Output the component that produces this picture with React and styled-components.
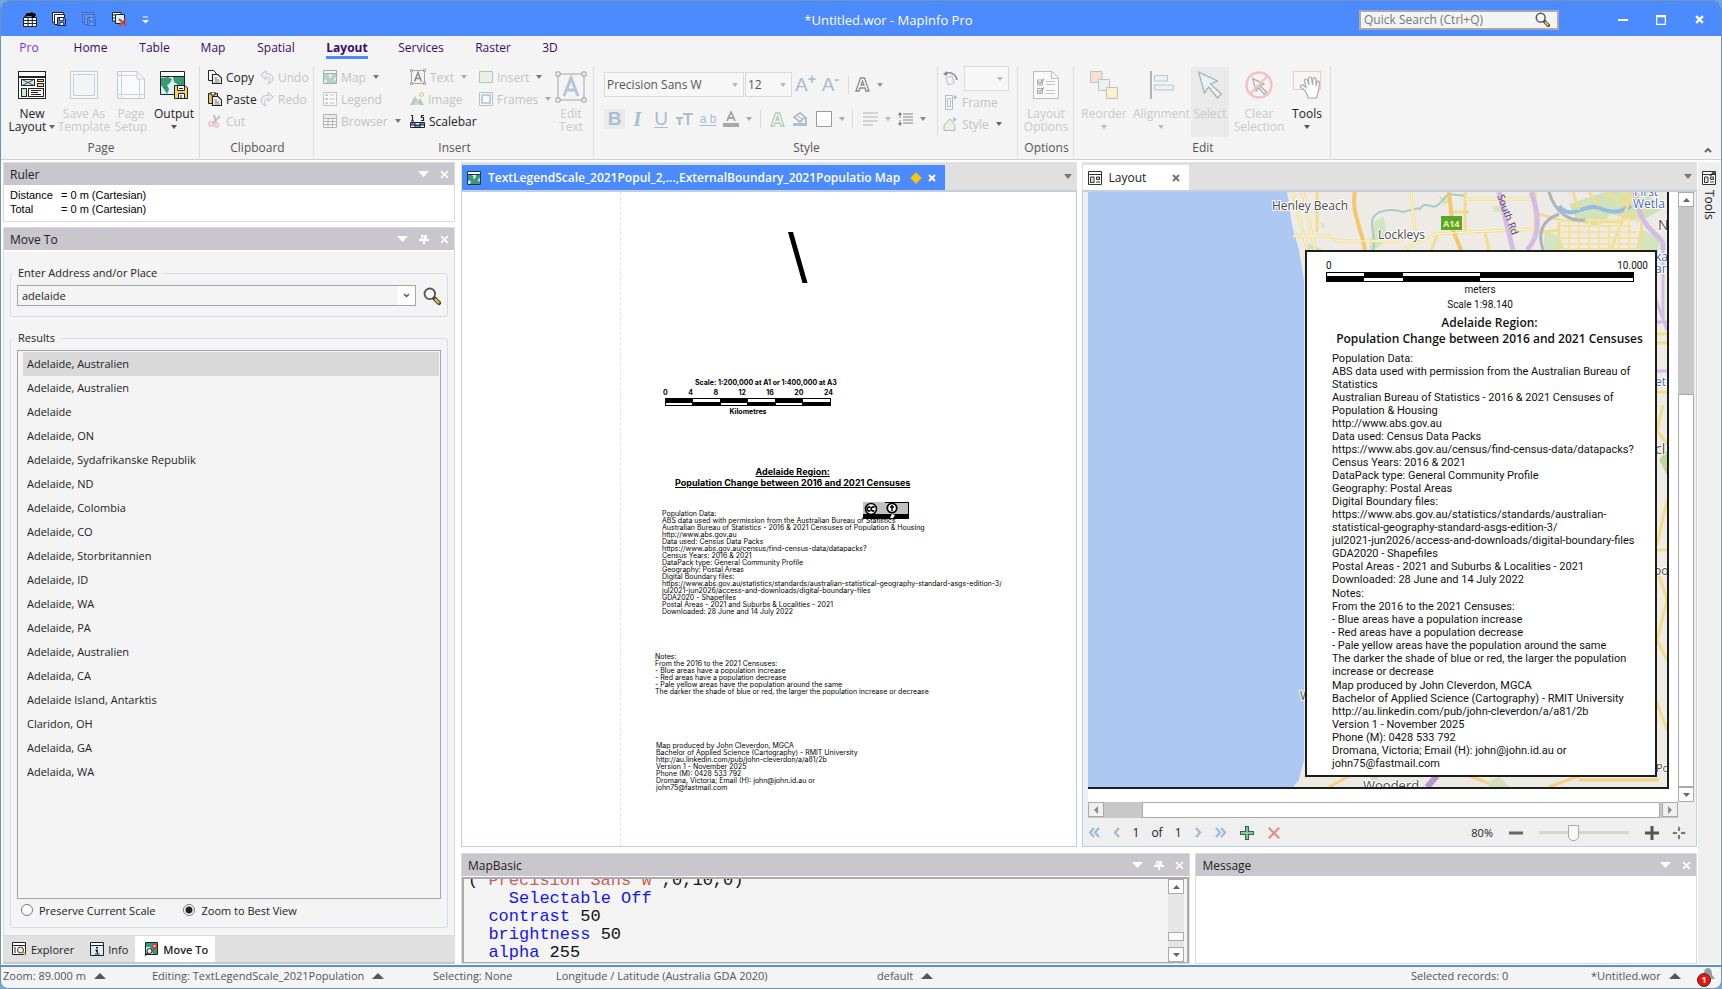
import React from 'react';
import styled, { createGlobalStyle, css } from 'styled-components';

const ui = '"Open Sans", "Noto Sans", sans-serif';
const arial = '"Liberation Sans", Arial, sans-serif';

const results = [
	'Adelaide, Australien', 'Adelaide, Australien', 'Adelaide', 'Adelaide, ON',
	'Adelaide, Sydafrikanske Republik', 'Adelaide, ND', 'Adelaide, Colombia',
	'Adelaide, CO', 'Adelaide, Storbritannien', 'Adelaide, ID', 'Adelaide, WA',
	'Adelaide, PA', 'Adelaide, Australien', 'Adelaida, CA',
	'Adelaide Island, Antarktis', 'Claridon, OH', 'Adelaida, GA', 'Adelaida, WA'
];

const ribbonTabs = [
	{ name: 'Pro', width: 56 }, { name: 'Home', width: 67 }, { name: 'Table', width: 61 },
	{ name: 'Map', width: 56 }, { name: 'Spatial', width: 70 }, { name: 'Layout', width: 72 },
	{ name: 'Services', width: 76 }, { name: 'Raster', width: 68 }, { name: '3D', width: 46 }
];

const dataStart = ['Population Data:'];
const dataMiddle = [
	'http://www.abs.gov.au', 'Data used: Census Data Packs',
	'https://www.abs.gov.au/census/find-census-data/datapacks?',
	'Census Years: 2016 & 2021', 'DataPack type: General Community Profile',
	'Geography: Postal Areas', 'Digital Boundary files:'
];
const dataEnd = [
	'GDA2020 - Shapefiles', 'Postal Areas - 2021 and Suburbs & Localities - 2021',
	'Downloaded: 28 June and 14 July 2022'
];
const notes = [
	'Notes:', 'From the 2016 to the 2021 Censuses:', '- Blue areas have a population increase',
	'- Red areas have a population decrease',
	'- Pale yellow areas have the population around the same'
];
const producer = [
	'Map produced by John Cleverdon, MGCA',
	'Bachelor of Applied Science (Cartography) - RMIT University',
	'http://au.linkedin.com/pub/john-cleverdon/a/a81/2b',
	'Version 1 - November 2025', 'Phone (M): 0428 533 792',
	'Dromana, Victoria; Email (H): john@john.id.au or', 'john75@fastmail.com'
];

const mapData = [
	...dataStart,
	'ABS data used with permission from the Australian Bureau of Statistics',
	'Australian Bureau of Statistics - 2016 & 2021 Censuses of Population & Housing',
	...dataMiddle,
	'https://www.abs.gov.au/statistics/standards/australian-statistical-geography-standard-asgs-edition-3/',
	'jul2021-jun2026/access-and-downloads/digital-boundary-files',
	...dataEnd
];
const mapNotes = [...notes, 'The darker the shade of blue or red, the larger the population increase or decrease'];

const layoutData = [
	...dataStart,
	'ABS data used with permission from the Australian Bureau of', 'Statistics',
	'Australian Bureau of Statistics - 2016 & 2021 Censuses of', 'Population & Housing',
	...dataMiddle,
	'https://www.abs.gov.au/statistics/standards/australian-',
	'statistical-geography-standard-asgs-edition-3/',
	'jul2021-jun2026/access-and-downloads/digital-boundary-files',
	...dataEnd
];
const layoutNotes = [...notes, 'The darker the shade of blue or red, the larger the population', 'increase or decrease'];

const GlobalStyle = createGlobalStyle`
	* { box-sizing: border-box; }
	body { margin: 0; background: #6fa9d6; font-family: ${ui}; font-size: 12px; color: #222; }
	button, input, select { font: inherit; color: inherit; margin: 0; padding: 0; border: none; background: none; border-radius: 0; }
	fieldset, ul, p, pre, h1, h2 { margin: 0; padding: 0; }
	svg { display: block; flex: none; }
`;

/* ---------- icons ---------- */

const Caret = ({ up, w = 7, h = 4, color = '#666' }) => (
	<svg width={w} height={h} viewBox="0 0 10 5" preserveAspectRatio="none">
		<path d={up ? 'M0 5L5 0L10 5Z' : 'M0 0H10L5 5Z'} fill={color} />
	</svg>
);

const CloseIcon = ({ size = 8, color = '#fff', weight = 2 }) => (
	<svg width={size} height={size} viewBox="0 0 8 8">
		<path d="M1 1L7 7M7 1L1 7" stroke={color} strokeWidth={weight} />
	</svg>
);

const PinIcon = () => (
	<svg width="10" height="10" viewBox="0 0 10 10">
		<path d="M2 1H8V5H10V7H6V10H4V7H0V5H2Z" fill="#fff" />
		<path d="M4 2V5" stroke="#c9c6cd" />
	</svg>
);

const SearchIcon = ({ size = 15 }) => (
	<svg width={size} height={size} viewBox="0 0 18 18">
		<path d="M11 11L16 16" stroke="#333" strokeWidth="4" strokeLinecap="round" />
		<path d="M12.5 12.5L15.5 15.5" stroke="#e8c547" strokeWidth="2.4" strokeLinecap="round" />
		<circle cx="6.8" cy="6.8" r="5.3" fill="#f8f8f8" stroke="#555" strokeWidth="1.8" />
	</svg>
);

const Floppy = ({ x = 0, y = 0, fill = '#4b8bff' }) => (
	<g transform={`translate(${x} ${y})`}>
		<path d="M.5.5H7.5L8.5 1.5V8.5H.5Z" fill={fill} stroke="#222" />
		<path d="M2.5 1V3.5H6.5V1M3 8V5.5H6.500V8" fill="#fff" stroke="#222" strokeWidth=".8" />
	</g>
);

const OpenTableIcon = () => (
	<svg width="14" height="15" viewBox="0 0 14 15">
		<path d="M.5 5.500H13.500V14.500H.5Z" fill="#fff" stroke="#222" />
		<path d="M1 8.500H13M1 11.500H13M5 6V14M9.300 6V14" stroke="#222" />
		<path d="M1 5L4 1H8V0L13 2L12 5L8 6L9 4H5Z" fill="#000" />
	</svg>
);

const SaveCopyIcon = ({ faded }) => (
	<svg width="15" height="15" viewBox="0 0 15 15" opacity={faded ? 0.3 : 1}>
		<path d="M.5.5H11.500V10.500H.5Z" fill={faded ? '#8fb5f5' : '#fff'} stroke="#222" />
		<path d="M2.500 2.500H12.500V12.500H2.500Z" fill={faded ? '#8fb5f5' : '#fff'} stroke="#222" />
		<Floppy x={5} y={5} />
	</svg>
);

const CloseAllIcon = () => (
	<svg width="15" height="15" viewBox="0 0 15 15">
		<path d="M.5.5H9V9H.5Z" fill="#fff" stroke="#222" />
		<path d="M.5 3H4M.5 6H4" stroke="#222" />
		<path d="M3.500 2.500H12.500V11.500H3.500Z" fill="#d6f3f5" stroke="#222" />
		<path d="M7 7L14 14M14 7L7 14" stroke="#d2423c" strokeWidth="2" />
	</svg>
);

const MapTile = ({ size = 14, faded, stroke = '#222' }) => (
	<svg width={size} height={size} viewBox="0 0 14 14" opacity={faded ? 0.35 : 1}>
		<path d="M.5.5H13.500V13.500H.5Z" fill="#fff" stroke={stroke} />
		<path d="M1 4H13V13H1Z" fill="#3a9a72" />
		<path d="M1 10L2.500 9L4 11L3 13H1ZM5 4L6.500 6L6 8L8 7.500L9 6V4ZM11.500 8L13 7V10L11 11Z" fill="#cfe9ee" />
		<path d="M1 3.500H13" stroke={stroke} />
	</svg>
);

const NewLayoutIcon = () => (
	<svg width="28" height="28" viewBox="0 0 28 28" shapeRendering="crispEdges">
		<path d="M.5.500H27.500V27.500H.5Z" fill="#fff" stroke="#222" />
		<path d="M1 5.500H27" stroke="#222" strokeWidth="2" />
		<path d="M3.500 8.500H16.500V14.500H3.500Z" fill="#cdeaf4" stroke="#222" />
		<path d="M5 9L15 14M5 14L15 9" stroke="#444" shapeRendering="auto" />
		<path d="M19 8H25V10.500H19ZM19 12.500H25V15H19Z" fill="#f0d877" stroke="#222" />
		<path d="M3.500 17.500H8V25.500H3.500Z" fill="#cfe8cd" stroke="#222" />
		<path d="M10.500 17.500H25.500V25.500H10.500Z" fill="#fff" stroke="#222" />
		<path d="M12.500 19.500H23M12.500 21.500H20M12.500 23.500H23" stroke="#222" />
	</svg>
);

const TemplateIcon = () => (
	<svg width="28" height="28" viewBox="0 0 28 28">
		<path d="M.5.5H27.500V27.500H.5Z" fill="#f4fafc" stroke="#c6cacd" />
		<path d="M3.500 3.500H24.500V24.500H3.500Z" fill="#f4f4f4" stroke="#b9cfe6" />
	</svg>
);

const PageSetupIcon = () => (
	<svg width="28" height="28" viewBox="0 0 28 28">
		<path d="M.5.5H20L27.500 8V27.500H.5Z" fill="#fafafa" stroke="#c6c9cc" />
		<path d="M20 .5V8H27.500" fill="none" stroke="#c6c9cc" />
		<path d="M4.500 1V27M1 4.500H20M1 23.500H27M22.500 8V27" stroke="#bdd3e8" />
	</svg>
);

const OutputIcon = () => (
	<svg width="28" height="28" viewBox="0 0 28 28">
		<path d="M.5.5H24.500V23.500H.5Z" fill="#d5f0f8" stroke="#222" />
		<path d="M1 1H24V5H1Z" fill="#fff" />
		<path d="M1 5.500H24" stroke="#222" />
		<path d="M1 7L8 6L12 8L10 12L7 14L9 18L7 23L4 18L1 14ZM13 6H24V14L20 17L17 13L14 11Z" fill="#3a9a72" />
		<path d="M14.500 14.500H25L27.500 17V27.500H14.500Z" fill="#f0d66a" stroke="#222" />
		<path d="M17.500 15V19.500H24.500V15M18.500 27V22.500H24.500V27" fill="#fff" stroke="#222" />
		<path d="M19 17.500H23M21 24V27" stroke="#222" />
	</svg>
);

const PageFoldIcon = ({ paste }) => (
	<svg width="14" height="14" viewBox="0 0 14 14">
		{paste
			? <path d="M.5 1.500H9.500V11.500H.5Z" fill="#e9c95b" stroke="#222" />
			: <path d="M.5.5H5.500L8 3V10.500H.5Z" fill="#fff" stroke="#222" />}
		{paste && <path d="M3 0H7V3H3Z" fill="#fff" stroke="#222" />}
		<path d="M4.500 4.500H10L13.500 8V13.500H4.500Z" fill="#fff" stroke="#222" strokeWidth="1.2" />
		<path d="M6.500 8H9M6.500 10H11.500M6.500 12H11.500" stroke="#444" strokeWidth=".8" />
	</svg>
);

const CutIcon = () => (
	<svg width="14" height="14" viewBox="0 0 14 14" fill="none">
		<path d="M6 1L8 8M12 2L5 9" stroke="#bfc1c4" strokeWidth="2" />
		<circle cx="3" cy="10" r="2" stroke="#ecc0bd" strokeWidth="1.500" />
		<circle cx="8.500" cy="11" r="2" stroke="#ecc0bd" strokeWidth="1.500" />
	</svg>
);

const UndoIcon = ({ flip }) => (
	<svg width="14" height="14" viewBox="0 0 14 14">
		<g transform={flip ? 'translate(14 0) scale(-1 1)' : undefined}>
			<path d="M.7 5L6 .7V3.500C10 3 13 5 13 8.500C13 11 11 13 8 13.500C10 11 10.500 7.500 6 7.300V9.500Z" fill="#e9eff0" stroke="#bcc2c4" />
		</g>
	</svg>
);

const LegendIcon = () => (
	<svg width="14" height="14" viewBox="0 0 14 14">
		<path d="M.5.5H13.500V13.500H.5Z" fill="#fafafa" stroke="#c4c4c4" />
		<path d="M2.500 3H4.500" stroke="#8fc1ee" strokeWidth="2" />
		<path d="M2.500 7H4.500" stroke="#f19a9a" strokeWidth="2" />
		<path d="M2.500 11H4.500" stroke="#a5d3a0" strokeWidth="2" />
		<path d="M6.500 3H11.500M6.500 7H11.500M6.500 11H11.500" stroke="#c4c4c4" />
	</svg>
);

const BrowserIcon = () => (
	<svg width="14" height="14" viewBox="0 0 14 14">
		<path d="M.5.5H13.500V13.500H.5Z" fill="#fafafa" stroke="#b5b5b5" />
		<path d="M1 1H13V4H1Z" fill="#e0edf4" />
		<path d="M.5 4.500H13.500M.5 7.500H13.500M.5 10.500H13.500M5 4V14M9.500 4V14" stroke="#b5b5b5" />
	</svg>
);

const TextFrameIcon = ({ size = 16, letter = '#888', thick = 2 }) => (
	<svg width={size} height={size} viewBox="0 0 16 16" fill="none">
		<path d="M1.500 1.500H14.500V14.500H1.500Z" stroke="#a5a5a5" strokeWidth={thick / 2} />
		<path d="M4.500 12.500L8 3.500L11.500 12.500M5.500 9.500H10.500" stroke={letter} strokeWidth="1.500" />
		<path d="M.5.5h2v2h-2zM13.500.5h2v2h-2zM.5 13.500h2v2h-2zM13.500 13.500h2v2h-2z" fill="#f4f4f4" stroke="#a0a0a0" strokeWidth={thick / 2} />
	</svg>
);

const ImageIcon = () => (
	<svg width="14" height="14" viewBox="0 0 14 14">
		<path d="M0 13L5 4L8 9L10 6L14 13Z" fill="#bcc7b5" />
		<path d="M3 13L6 8L10 13Z" fill="#cfdcbd" />
		<circle cx="11.500" cy="2.500" r="2" fill="#f6ecc0" stroke="#d8cc9c" />
	</svg>
);

const ScalebarIcon = () => (
	<svg width="15" height="14" viewBox="0 0 15 14">
		<path d="M1 1.500H2.500V7M1 7H4M14 1.500H11.500V3.500H13.500V6.500H11" fill="none" stroke="#222" strokeWidth="1.200" />
		<path d="M.5 8.500H14.500V13.500H.5Z" fill="#fff" stroke="#222" />
		<path d="M1 9H5V11H1ZM10 9H14V11H10ZM5 11H10V13H5Z" fill="#4a9be8" />
		<path d="M.5 11H14.500M5 8.500V13.500M10 8.500V13.500" stroke="#222" />
	</svg>
);

const FrameInsertIcon = ({ inner }) => (
	<svg width="14" height="14" viewBox="0 0 14 14">
		<path d={inner ? 'M.5.5H13.500V13.500H.5Z' : 'M.5 1.500H13.500V12.500H.5Z'} fill={inner ? '#f7f7f7' : '#e9f0e6'} stroke="#b9c1b9" />
		{inner && <path d="M3 3H11V11H3Z" fill="#f9fcfe" stroke="#a9c2dc" strokeWidth="1.500" />}
	</svg>
);

const FontColorIcon = () => (
	<svg width="16" height="17" viewBox="0 0 16 17">
		<path d="M4 10L8 1L12 10M5.500 7H10.500" fill="none" stroke="#a4a4a4" strokeWidth="1.800" />
		<path d="M0 12H16V16H0Z" fill="#a8a8a8" />
	</svg>
);

const HollowA = ({ color = '#8c8c8c' }) => (
	<svg width="15" height="15" viewBox="0 0 15 15">
		<path d="M1 14L5.500 1H9.500L14 14H11L10 11H5L4 14ZM6 8H9L7.500 4Z" fill="#f7f7f7" stroke={color} strokeWidth="1.300" />
	</svg>
);

const BucketIcon = () => (
	<svg width="15" height="15" viewBox="0 0 15 15">
		<path d="M1 5L7 1L12 5L7 10Z" fill="#f4f4f4" stroke="#b0b0b0" strokeWidth="1.500" />
		<path d="M3 3L9 7" stroke="#b0b0b0" />
		<path d="M13 5V11" stroke="#a9c2dc" strokeWidth="2" />
		<path d="M0 12.500H14" stroke="#a9c2dc" strokeWidth="3" />
	</svg>
);

const BoxIcon = () => (
	<svg width="16" height="16" viewBox="0 0 16 16"><path d="M.5.500H15.500V15.500H.5Z" fill="#fff" stroke="#999" /></svg>
);

const ParagraphIcon = () => (
	<svg width="15" height="14" viewBox="0 0 15 14"><path d="M0 1H15M0 5H15M0 9H15M0 13H10" stroke="#c9c9c9" strokeWidth="1.500" /></svg>
);

const LineSpaceIcon = () => (
	<svg width="15" height="14" viewBox="0 0 15 14">
		<path d="M5 2H15M5 5H15M5 8H15M5 11H15" stroke="#888" />
		<path d="M2 1V13" stroke="#888" strokeDasharray="5 2" />
		<path d="M0 3L2 0L4 3ZM0 11L2 14L4 11Z" fill="#777" />
	</svg>
);

const SmallCapsIcon = () => (
	<svg width="17" height="14" viewBox="0 0 17 14"><path d="M0 6H7M3.500 6V13M7 2H17M12 2V13" stroke="#a9bdd3" strokeWidth="2.200" /></svg>
);

const RotateIcon = () => (
	<svg width="15" height="15" viewBox="0 0 15 15" fill="none">
		<path d="M2 3C7 0 13 3 14 9" stroke="#888" strokeWidth="1.500" />
		<path d="M0 3L4 0L4 5Z" fill="#888" />
		<path d="M3 7L9 5L11 12L5 14Z" stroke="#a9c2dc" />
	</svg>
);

const FrameStyleIcon = () => (
	<svg width="15" height="15" viewBox="0 0 15 15">
		<path d="M2.500.5H9.500V14.500H2.500Z" fill="#f7f7f7" stroke="#b9b9b9" />
		<path d="M4.500 3.500H7.500V11.500H4.500Z" fill="none" stroke="#a9c2dc" />
		<path d="M11 0L14 2.500L11 5Z" fill="#a9b9c9" />
	</svg>
);

const ShapeStyleIcon = () => (
	<svg width="15" height="15" viewBox="0 0 15 15">
		<path d="M1 8L7 2L12 8V13.500H1Z" fill="#e9f0e6" stroke="#b5b9b5" />
		<path d="M10 0L14 2.500L10 5Z" fill="#a9c2dc" />
	</svg>
);

const OptionsIcon = () => (
	<svg width="26" height="28" viewBox="0 0 26 28">
		<path d="M.5.5H19L25.500 7V27.500H.5Z" fill="#fafafa" stroke="#bdbdbd" />
		<path d="M18.500.5V7.500H25.500" fill="none" stroke="#bdbdbd" />
		<path d="M4.500 9H9.500V14H4.500ZM4.500 17.500H9.500V22.500H4.500Z" fill="none" stroke="#aaa" />
		<path d="M5.500 11L7 12.500L11 8M5.500 19.500L7 21L11 16.500" fill="none" stroke="#aaa" strokeWidth="1.500" />
		<path d="M13 10.500H22M13 13.500H22M13 19.500H22M13 22.500H22" stroke="#c4c4c4" />
	</svg>
);

const ReorderIcon = () => (
	<svg width="28" height="28" viewBox="0 0 28 28" stroke="#c4c0bc">
		<path d="M.5.500H12V11.500H.5Z" fill="#f7dfd3" />
		<path d="M8.500 8.500H19.500V19.500H8.500Z" fill="#e5f3f9" />
		<path d="M16.500 16.500H27.500V27.500H16.500Z" fill="#f7f2cd" />
	</svg>
);

const AlignIcon = () => (
	<svg width="24" height="28" viewBox="0 0 24 28">
		<path d="M1 0V28" stroke="#b4b4b4" strokeWidth="2" />
		<path d="M4.500 4.500H17.500V10H4.500ZM4.500 14H23.500V19H4.500Z" fill="#e9f2f7" stroke="#c0c4c8" />
	</svg>
);

const arrowPath = 'M1 1L20 10L13 13L24 23L20 27L11 16L7 22Z';

const SelectIcon = () => (
	<svg width="27" height="28" viewBox="0 0 26 28"><path d={arrowPath} fill="#e5f2f8" stroke="#a9adb0" strokeWidth="1.200" /></svg>
);

const ClearIcon = () => (
	<svg width="28" height="28" viewBox="0 0 28 28">
		<circle cx="14" cy="14" r="12.500" fill="#f8f4f4" stroke="#f4c3c0" strokeWidth="2.500" />
		<path d={arrowPath} transform="translate(7 7) scale(.6)" fill="#eef6fa" stroke="#a9a9a9" strokeWidth="2" />
		<path d="M22.500 5L5 23" stroke="#f4c3c0" strokeWidth="2.500" />
	</svg>
);

const HandIcon = () => (
	<svg width="28" height="28" viewBox="0 0 28 28">
		<path d="M.5.500H27.500V18.500H.5Z" fill="#f7f5f5" stroke="#eccbc8" />
		<path d="M12.500 20L8 16.500C6.500 15 8.500 13 10.500 14.500L13 16.500L11.500 9.500C11.500 7.500 14 7.500 14.500 9.500L16 14L15.500 7.500C15.500 5.500 18.500 5.500 18.500 7.500L19.500 14L20 8C20.500 6.500 23 6.500 23 8.500L23 15L24 11C24.500 9.500 26.800 10 26.500 12L25.500 20C25 23 24 24 23.500 27H15C15 24.500 14 22.500 12.500 20Z" fill="#fff" stroke="#aaa" strokeWidth="1.200" />
	</svg>
);

const LayoutTabIcon = ({ tool }) => (
	<svg width="14" height="14" viewBox="0 0 14 14">
		<path d="M.5.5H13.500V13.500H.5Z" fill="#fff" stroke="#333" />
		<path d="M.5 3.500H13.500" stroke="#333" />
		<path d="M2.500 6H6V11.500H2.500Z" fill="#cdeaf4" stroke="#333" />
		<path d="M8.500 6H11.500V8.500H8.500Z" fill="#f0d877" stroke="#333" />
		<path d="M8 11H12" stroke="#333" />
		{tool && <path d="M8 5L12 1M10 0L13 3" stroke="#333" strokeWidth="1.500" />}
	</svg>
);

const ExplorerIcon = () => (
	<svg width="15" height="14" viewBox="0 0 15 14">
		<path d="M.5.5H13.500V12.500H.5Z" fill="#fff" stroke="#222" />
		<path d="M.5 3.500H13.500M2 6H4M2 8H4M2 10H4" stroke="#222" />
		<circle cx="8.500" cy="8" r="3" fill="#e8f5f8" stroke="#333" />
		<path d="M11 10.500L14 13.500" stroke="#d6b13c" strokeWidth="2" />
	</svg>
);

const InfoIcon = () => (
	<svg width="14" height="14" viewBox="0 0 14 14">
		<path d="M.5.5H13.500V13.500H.5Z" fill="#d5f0f8" stroke="#222" />
		<path d="M1 2H13" stroke="#fff" strokeWidth="2" />
		<path d="M.5 3.500H13.500M5.500 8H7.500V12M5 12H9.500" stroke="#222" />
		<path d="M6 5H8V6.500H6Z" fill="#222" />
	</svg>
);

const MoveToIcon = () => (
	<svg width="15" height="14" viewBox="0 0 15 14">
		<path d="M1.500.5H13.500V12.500H1.500Z" fill="#3a9a72" stroke="#222" />
		<path d="M2 5H6L9 12H2Z" fill="#cfe9ee" />
		<circle cx="5.500" cy="9" r="2.500" fill="#dff" stroke="#222" />
		<path d="M3.500 11L1 13.500" stroke="#222" strokeWidth="1.500" />
		<path d="M8 4a2.500 2.500 0 0 1 5 0L10.500 9Z" fill="#e53935" />
		<circle cx="10.500" cy="4" r="1" fill="#fff" />
	</svg>
);

const Chevrons = ({ right, double }) => (
	<svg width={double ? 12 : 7} height="11" viewBox={double ? '0 0 12 11' : '0 0 7 11'}>
		<g transform={right ? `translate(${double ? 12 : 7} 0) scale(-1 1)` : undefined}>
			<path d={double ? 'M6 1L2 5.500L6 10M11 1L7 5.500L11 10' : 'M6 1L2 5.500L6 10'} fill="none" stroke="#9bbbdc" strokeWidth="2.200" />
		</g>
	</svg>
);

const PlusIcon = ({ green }) => (
	<svg width="14" height="14" viewBox="0 0 14 14">
		<path d="M7 0V14M0 7H14" stroke={green ? '#3d5d49' : '#555'} strokeWidth={green ? 4 : 3} />
		{green && <path d="M7 1V13M1 7H13" stroke="#7fd09a" strokeWidth="1.800" />}
	</svg>
);

const MinusIcon = () => (
	<svg width="14" height="14" viewBox="0 0 14 14"><path d="M0 7H14" stroke="#666" strokeWidth="3" /></svg>
);

const SpreadIcon = () => (
	<svg width="14" height="14" viewBox="0 0 14 14">
		<path d="M7 2V5M7 9V12M1 7H5M9 7H13" stroke="#555" strokeWidth="1.500" />
		<path d="M5.500 3L7 0L8.500 3ZM5.500 11L7 14L8.500 11ZM3 5.500L0 7L3 8.500ZM11 5.500L14 7L11 8.500Z" fill="#777" />
	</svg>
);

const LicenceBadge = () => (
	<svg width="46" height="17" viewBox="0 0 46 17">
		<path d="M0 0H46V17H0Z" fill="#c0c0c0" />
		<path d="M22 .5H45.500V17" fill="none" stroke="#000" />
		<path d="M0 12H46V17H0Z" fill="#000" />
		<circle cx="8" cy="7" r="5.500" fill="#fff" stroke="#000" strokeWidth="1.500" />
		<path d="M7.500 5.500A2 2 0 1 0 7.500 8.500M11.500 5.500A2 2 0 1 0 11.500 8.500" fill="none" stroke="#000" strokeWidth="1.500" />
		<circle cx="29" cy="6" r="4.700" fill="#fff" stroke="#000" strokeWidth="1.800" />
		<path d="M29 3V9M27 5H31" stroke="#000" strokeWidth="1.500" />
		<path d="M27 16L29 12L32 13L30 16Z" fill="#fff" />
	</svg>
);

/* ---------- window frame ---------- */

const Window = styled.div`
	display: flex;
	flex-direction: column;
	height: 100vh;
	border: 1px solid #6e93b3;
	border-radius: 8px;
	overflow: hidden;
	background: #f4f4f4;
`;

const TitleBar = styled.header`
	display: grid;
	grid-template-columns: 16fr auto 15fr;
	align-items: center;
	height: 35px;
	padding: 2px 16px 0 22px;
	background: #4b8aff;
`;

const Title = styled.h1`
	font-size: 13px;
	font-weight: 400;
	color: #fff;
`;

const QuickAccess = styled.div`
	display: flex;
	align-items: center;
	gap: 15px;
`;

const WindowTools = styled.div`
	display: flex;
	justify-content: flex-end;
	align-items: center;
`;

const QuickSearch = styled.label`
	display: flex;
	align-items: center;
	width: 200px;
	height: 20px;
	margin-right: 58px;
	padding: 0 7px 0 3px;
	border: 2px solid #a9a9a9;
	background: #f4f4f4;
	input { flex: 1; min-width: 0; outline: none; font-size: 12px; }
	input::placeholder { color: #777; }
`;

const WindowButton = styled.button`
	display: flex;
	justify-content: center;
	width: ${props => props.$w}px;
`;

const Tabs = styled.nav`
	display: flex;
	height: 23px;
`;

const RibbonTab = styled.button`
	display: flex;
	justify-content: center;
	width: ${props => props.$w}px;
	color: ${props => (props.$first ? '#8a2be2' : '#3b0a66')};
	font-weight: ${props => (props.$active ? 700 : 400)};
	span {
		height: 23px;
		line-height: 24px;
		border-bottom: 3px solid ${props => (props.$active ? '#4b8aff' : 'transparent')};
	}
`;

const Ribbon = styled.div`
	display: flex;
	height: 101px;
	padding-top: 7px;
	border-bottom: 1px solid #cfcfcf;
`;

const Group = styled.section`
	display: flex;
	flex-direction: column;
	width: ${props => props.$w}px;
	height: 92px;
	border-right: 1px solid #dcdcdc;
`;

const GroupBody = styled.div`
	display: flex;
	height: 74px;
	padding-left: ${props => props.$pad || 0}px;
`;

const GroupLabel = styled.h2`
	padding-left: 2px;
	text-align: center;
	font-size: 12px;
	font-weight: 400;
	line-height: 16px;
	color: #555;
`;

const BigButton = styled.button`
	display: flex;
	flex-direction: column;
	align-items: center;
	width: ${props => props.$w}px;
	height: 70px;
	margin-top: 1px;
	padding-top: 4px;
	gap: ${props => props.$gap || 8}px;
	line-height: 13px;
	white-space: nowrap;
	color: ${props => (props.disabled ? '#c9c9c9' : '#222')};
	background: ${props => (props.$shade ? '#eaeaea' : 'none')};
	div { display: flex; flex-direction: column; align-items: center; }
	div span { display: flex; align-items: center; gap: 3px; height: 13px; }
`;

const SmallColumn = styled.div`
	display: flex;
	flex-direction: column;
	width: ${props => props.$w}px;
`;

const SmallButton = styled.button`
	display: flex;
	align-items: center;
	gap: 4px;
	height: 22px;
	white-space: nowrap;
	color: ${props => (props.disabled ? '#c3c3c3' : '#222')};
	> svg:nth-of-type(2) { margin-left: 3px; }
`;

const FontArea = styled.div`
	display: flex;
	flex-direction: column;
	width: 333px;
	padding-top: 6px;
	gap: 12px;
`;

const FontRow = styled.div`
	display: flex;
	align-items: center;
	height: ${props => props.$h}px;
`;

const Combo = styled.div`
	display: flex;
	align-items: center;
	width: ${props => props.$w}px;
	height: 25px;
	margin-right: 1px;
	padding: 0 5px 0 2px;
	border: 1px solid #dadada;
	background: #f7f7f7;
	select { flex: 1; min-width: 0; appearance: none; color: #555; }
`;

const IconButton = styled.button`
	display: flex;
	align-items: center;
	justify-content: center;
	gap: 7px;
	width: ${props => props.$w || 24}px;
	height: 20px;
	background: ${props => (props.$shade ? '#eaeaea' : 'none')};
`;

const Letter = styled.span`
	font-family: ${props => (props.$serif ? '"Liberation Serif", serif' : arial)};
	font-size: ${props => props.$size || 19}px;
	line-height: 20px;
	color: #a9bdd3;
	${props => props.$bold && css`font-weight: 700;`}
	${props => props.$italic && css`font-style: italic; font-weight: 700;`}
	${props => props.$under && css`text-decoration: underline; text-underline-offset: 2px;`}
	sup { font-size: 14px; line-height: 0; font-weight: 700; }
`;

const RowRule = styled.i`
	width: 1px;
	height: 18px;
	margin: 0 ${props => props.$m}px;
	background: #dadada;
`;

const FrameArea = styled.div`
	display: flex;
	flex-direction: column;
	height: 70px;
	padding-left: 5px;
	border-left: 1px solid #dcdcdc;
`;

const RotateRow = styled.div`
	display: flex;
	align-items: center;
	gap: 6px;
	height: 25px;
`;

const Collapse = styled.button`
	align-self: flex-end;
	margin: 0 9px 6px auto;
`;

/* ---------- workspace ---------- */

const Workspace = styled.main`
	display: flex;
	flex: 1;
	min-height: 0;
	padding: 2px 1px 1px 2px;
	background: #fff;
`;

const LeftColumn = styled.div`
	display: flex;
	flex-direction: column;
	width: 452px;
	margin-right: 6px;
`;

const Panel = styled.section`
	display: flex;
	flex-direction: column;
	min-width: 0;
	min-height: 0;
	border: 1px solid #dadada;
	background: #fff;
	${props => props.$flex && css`flex: ${props.$flex};`}
	${props => props.$gap && css`margin-bottom: ${props.$gap}px;`}
`;

const PanelHeader = styled.header`
	display: flex;
	align-items: center;
	gap: 11px;
	height: 22px;
	flex: none;
	padding: 0 5px 0 6px;
	background: #c9c6cd;
	h2 { flex: 1; font-size: 12px; font-weight: 400; }
	button { display: block; }
`;

const RulerText = styled.dl`
	display: grid;
	grid-template-columns: 51px auto;
	margin: 0;
	padding: 3px 6px 5px;
	font: 11px/14px ${arial};
	color: #000;
	dd { margin: 0; }
`;

const MoveBody = styled.div`
	display: flex;
	flex-direction: column;
	flex: 1;
	min-height: 0;
	padding: 13px 6px 7px;
	border-top: 2px solid #fff;
	background: #f4f4f4;
	font-size: 11px;
`;

const FieldGroup = styled.fieldset`
	display: flex;
	flex-direction: column;
	flex: ${props => (props.$grow ? 1 : 'none')};
	min-width: 0;
	min-height: 0;
	padding: ${props => (props.$grow ? '4px 6px 6px' : '4px 6px 10px')};
	border: 1px solid #d3dde8;
	border-radius: 3px;
	margin-bottom: ${props => (props.$grow ? 0 : 13)}px;
	legend { margin-left: -5px; padding: 0 6px; line-height: 16px; }
`;

const AddressRow = styled.div`
	display: flex;
	align-items: center;
	gap: 7px;
`;

const AddressBox = styled.div`
	display: flex;
	flex: 1;
	height: 21px;
	border: 1px solid #a5a5a8;
	input { flex: 1; min-width: 0; padding-left: 4px; outline: none; }
	button { display: flex; align-items: center; justify-content: center; width: 17px; background: #fff; }
`;

const ResultList = styled.ul`
	flex: 1;
	min-height: 0;
	padding: 1px 1px 0 5px;
	border: 1px solid #a5a5a8;
	list-style: none;
	overflow: hidden;
`;

const Result = styled.li`
	height: 24px;
	padding-left: 4px;
	line-height: 24px;
	background: ${props => (props.$selected ? '#d9d9d9' : 'none')};
`;

const Radios = styled.div`
	display: flex;
	align-items: center;
	gap: 28px;
	height: 22px;
	padding-left: 4px;
	label { display: flex; align-items: center; gap: 6px; }
	input {
		appearance: none;
		width: 12px;
		height: 12px;
		border: 1px solid #777;
		border-radius: 50%;
		background: #fff;
	}
	input:checked { background: radial-gradient(circle, #222 3px, #fff 4px); }
`;

const PanelTabs = styled.div`
	display: flex;
	height: 28px;
	border-bottom: 2px solid #c9c9c9;
	background: #e0e0e0;
`;

const PanelTab = styled.button`
	display: flex;
	align-items: center;
	gap: 4px;
	padding: 0 7px 0 9px;
	font-size: 11px;
	background: ${props => (props.$active ? '#fff' : 'none')};
	font-weight: ${props => (props.$active ? 600 : 400)};
`;

const Center = styled.div`
	display: flex;
	flex-direction: column;
	flex: 1;
	min-width: 0;
`;

const Docs = styled.div`
	display: flex;
	flex: 1;
	min-height: 0;
	gap: 5px;
	margin-bottom: 6px;
`;

const DocPane = styled.section`
	display: flex;
	flex-direction: column;
	flex: 1;
	min-width: 0;
`;

const DocTabs = styled.div`
	display: flex;
	align-items: flex-end;
	height: 29px;
	padding-right: 5px;
	border-bottom: 1px solid #cfcfcf;
	background: #e0e0e0;
	> button:last-child { align-self: center; margin-left: auto; }
`;

const DocTab = styled.div`
	display: flex;
	align-items: center;
	gap: 7px;
	height: 25px;
	padding: 0 9px 0 5px;
	margin-left: 1px;
	white-space: nowrap;
	background: ${props => (props.$active ? '#4b8aff' : '#fff')};
	color: ${props => (props.$active ? '#fff' : '#222')};
	font-weight: ${props => (props.$active ? 600 : 400)};
	button { display: block; margin-left: ${props => (props.$active ? 1 : 19)}px; }
`;

const Diamond = styled.i`
	width: 8px;
	height: 8px;
	margin-left: 5px;
	background: #ffc400;
	transform: rotate(45deg);
`;

const DocBody = styled.div`
	display: flex;
	flex-direction: column;
	flex: 1;
	min-height: 0;
	border: 1px solid #b9cfec;
	background: #fff;
`;

/* free canvas: every child is an object placed on the map */
const MapCanvas = styled.div`
	position: relative;
	flex: 1;
	overflow: hidden;
	font-family: Inter, ${arial};
	color: #000;
	&::before {
		content: '';
		position: absolute;
		left: 158px;
		top: 0;
		bottom: 0;
		border-left: 1px dashed #e3e3e3;
	}
`;

const Placed = styled.div`
	position: absolute;
	left: ${props => props.$x}px;
	top: ${props => props.$y}px;
	white-space: nowrap;
	font-size: ${props => props.$size || 7}px;
	line-height: ${props => props.$lh || 7}px;
	${props => props.$title && css`
		text-align: center;
		font-weight: 700;
		text-decoration: underline;
	`}
`;

const Scale = styled.div`
	display: flex;
	flex-direction: column;
	align-items: center;
	width: 166px;
	font-weight: 700;
	line-height: 10px;
	div { display: flex; justify-content: space-between; width: 170px; }
	svg { margin: 0 0 1px; }
`;

const LayoutView = styled.div`
	display: grid;
	grid-template-columns: 1fr 18px;
	grid-template-rows: 1fr 17px 27px;
	flex: 1;
	min-height: 0;
	padding-left: 5px;
	background: #efefef;
`;

const PageArea = styled.div`
	display: flex;
	justify-content: flex-end;
	min-width: 0;
	padding-right: 9px;
	overflow: hidden;
	background: #fff;
`;

const Page = styled.div`
	position: relative;
	flex: 1;
	align-self: flex-start;
	height: 597px;
	border: solid #1d1d1d;
	border-width: 0 2px 2px 0;
	background: #adc8f3;
	overflow: hidden;
	> svg { position: absolute; right: 0; top: 0; }
`;

const LegendCard = styled.article`
	position: absolute;
	right: 10px;
	top: 58px;
	width: 352px;
	height: 527px;
	padding: 8px 7px 0 19px;
	border: 2px solid #1d1d1d;
	background: #fff;
	color: #111;
	font: 11px/13px Roboto, ${ui};
	p { padding-left: 6px; }
	p + p { margin-top: 1px; }
	span { display: block; white-space: nowrap; }
	h2 { padding: 0 0 0 5px; margin: 3px 0 5px; text-align: center; font: 600 12px/16px ${ui}; white-space: nowrap; }
`;

const ScaleEnds = styled.div`
	display: flex;
	justify-content: space-between;
	font-size: 10px;
	line-height: 12px;
`;

const ScaleCaption = styled.div`
	width: 308px;
	text-align: center;
	font-size: 10px;
	line-height: 15px;
`;

const ScrollBar = styled.div`
	display: flex;
	flex-direction: ${props => (props.$row ? 'row' : 'column')};
	justify-content: space-between;
	background: ${props => props.$track || '#c8c8c8'};
	${props => (props.$row ? 'height: 16px;' : 'width: 16px;')}
	button {
		display: flex;
		align-items: center;
		justify-content: center;
		width: 16px;
		height: 15px;
		border: 1px solid #aaa;
		background: ${props => (props.$row ? '#efefef' : '#fff')};
	}
`;

const Thumb = styled.div`
	flex: ${props => props.$flex};
	margin: ${props => props.$margin || 0};
	border: 1px solid #aaa;
	background: #fff;
`;

const PageBar = styled.div`
	grid-column: 1 / 3;
	display: flex;
	align-items: center;
	padding-right: 10px;
	gap: 13px;
	button { display: block; }
`;

const PageCount = styled.span`
	display: flex;
	gap: 12px;
`;

const ZoomTools = styled.div`
	display: flex;
	align-items: center;
	gap: 16px;
	margin-left: auto;
	font-size: 11px;
	input {
		appearance: none;
		width: 90px;
		height: 16px;
		background: linear-gradient(#d5d5d5, #d5d5d5) center / 100% 3px no-repeat;
	}
	input::-webkit-slider-thumb {
		appearance: none;
		width: 11px;
		height: 16px;
		border: 1px solid #aaa;
		border-radius: 0 0 5px 5px;
		background: #f7f7f7;
	}
`;

const BottomRow = styled.div`
	display: grid;
	grid-template-columns: 730fr 502fr;
	gap: 5px;
	height: 111px;
`;

const Editor = styled.div`
	display: flex;
	flex: 1;
	min-height: 0;
	margin-top: 1px;
	padding-right: 3px;
	border: 2px solid #ababab;
	border-bottom-width: 1px;
	background: #f4f4f4;
`;

const Code = styled.pre`
	display: flex;
	flex-direction: column;
	justify-content: flex-end;
	flex: 1;
	padding-left: 4px;
	overflow: hidden;
	font: 17px/18px "Liberation Mono", monospace;
	color: #111;
	b { font-weight: 400; color: #1414f0; }
	em { font-style: normal; color: #cd5c5c; }
`;

const Sidebar = styled.aside`
	width: 22px;
	margin-left: 1px;
	padding-top: 9px;
	background: #efefef;
	button { display: flex; flex-direction: column; align-items: center; gap: 5px; width: 22px; }
	span { writing-mode: vertical-rl; }
`;

const StatusBar = styled.footer`
	display: flex;
	align-items: center;
	height: 23px;
	padding: 0 6px 4px 2px;
	border-top: 2px solid #5b8fd0;
	color: #555;
	font-size: 11px;
	white-space: nowrap;
`;

const StatusItem = styled.button`
	display: flex;
	align-items: center;
	gap: 8px;
	flex: none;
	width: ${props => (props.$w ? `${props.$w}px` : 'auto')};
`;

const Bell = styled.button`
	position: relative;
	width: 18px;
	height: 18px;
	margin: 2px 0 0 auto;
	svg { position: absolute; right: 0; top: 0; }
	span {
		position: absolute;
		left: 0;
		bottom: -1px;
		width: 14px;
		height: 14px;
		border: 1px solid #333;
		border-radius: 50%;
		background: #f01010;
		color: #fff;
		font-size: 9px;
		font-weight: 700;
		line-height: 12px;
		text-align: center;
	}
`;

/* ---------- pieces ---------- */

function Big({ icon, lines, width, off, caret, shade, gap }) {
	return (
		<BigButton $w={width} $gap={gap} disabled={off} $shade={shade}>
			{icon}
			<div>
				{lines.map((line, i) => (
					<span key={line}>{line}{caret === 'side' && i === lines.length - 1 && <Caret w={6} h={4} />}</span>
				))}
				{caret === 'below' && <span><Caret w={6} h={4} color={off ? '#bbb' : '#555'} /></span>}
			</div>
		</BigButton>
	);
}

function Small({ icon, label, off = true, caret }) {
	return (
		<SmallButton disabled={off}>
			{icon}
			<span>{label}</span>
			{caret && <Caret w={6} h={4} color={caret} />}
		</SmallButton>
	);
}

function Header({ title, pin }) {
	return (
		<PanelHeader>
			<h2>{title}</h2>
			<button aria-label={`${title} menu`}><Caret w={11} h={6} color="#fff" /></button>
			{pin && <button aria-label={`Pin ${title}`}><PinIcon /></button>}
			<button aria-label={`Close ${title}`}><CloseIcon size={9} weight={1.5} /></button>
		</PanelHeader>
	);
}

function TopBar() {
	return (
		<TitleBar>
			<QuickAccess>
				<button aria-label="Open table"><OpenTableIcon /></button>
				<button aria-label="Save copy"><SaveCopyIcon /></button>
				<button aria-label="Save table" disabled><SaveCopyIcon faded /></button>
				<button aria-label="Close all"><CloseAllIcon /></button>
				<button aria-label="Customize">
					<svg width="7" height="8" viewBox="0 0 7 8"><path d="M1 1H6" stroke="#fff" /><path d="M0 4H7L3.500 7.500Z" fill="#fff" /></svg>
				</button>
			</QuickAccess>
			<Title>*Untitled.wor - MapInfo Pro</Title>
			<WindowTools>
				<QuickSearch>
					<input type="text" placeholder="Quick Search (Ctrl+Q)" aria-label="Quick Search" />
					<SearchIcon />
				</QuickSearch>
				<WindowButton $w={12} aria-label="Minimize">
					<svg width="10" height="10" viewBox="0 0 10 10"><path d="M0 5H10" stroke="#fff" strokeWidth="2" /></svg>
				</WindowButton>
				<WindowButton $w={64} aria-label="Maximize">
					<svg width="10" height="10" viewBox="0 0 10 10"><path d="M.5.5H9.500V9.500H.5ZM0 1.500H10" fill="none" stroke="#fff" strokeWidth="1.500" /></svg>
				</WindowButton>
				<WindowButton $w={12} aria-label="Close"><CloseIcon size={9} /></WindowButton>
			</WindowTools>
		</TitleBar>
	);
}

function RibbonBar() {
	return (
		<>
			<Tabs>
				{ribbonTabs.map((tab, i) => (
					<RibbonTab key={tab.name} $w={tab.width} $first={i === 0} $active={tab.name === 'Layout'}>
						<span>{tab.name}</span>
					</RibbonTab>
				))}
			</Tabs>
			<Ribbon>
				<Group $w={199}>
					<GroupBody $pad={5}>
						<Big icon={<NewLayoutIcon />} lines={['New', 'Layout']} width={52} caret="side" />
						<Big icon={<TemplateIcon />} lines={['Save As', 'Template']} width={52} off />
						<Big icon={<PageSetupIcon />} lines={['Page', 'Setup']} width={42} off />
						<Big icon={<OutputIcon />} lines={['Output']} width={44} caret="below" />
					</GroupBody>
					<GroupLabel>Page</GroupLabel>
				</Group>
				<Group $w={114}>
					<GroupBody $pad={8}>
						<SmallColumn $w={52}>
							<Small icon={<PageFoldIcon />} label="Copy" off={false} />
							<Small icon={<PageFoldIcon paste />} label="Paste" off={false} />
							<Small icon={<CutIcon />} label="Cut" />
						</SmallColumn>
						<SmallColumn $w={50}>
							<Small icon={<UndoIcon />} label="Undo" />
							<Small icon={<UndoIcon flip />} label="Redo" />
						</SmallColumn>
					</GroupBody>
					<GroupLabel>Clipboard</GroupLabel>
				</Group>
				<Group $w={280}>
					<GroupBody $pad={9}>
						<SmallColumn $w={87}>
							<Small icon={<MapTile faded />} label="Map" caret="#777" />
							<Small icon={<LegendIcon />} label="Legend" />
							<Small icon={<BrowserIcon />} label="Browser" caret="#777" />
						</SmallColumn>
						<SmallColumn $w={69}>
							<Small icon={<TextFrameIcon />} label="Text" caret="#aaa" />
							<Small icon={<ImageIcon />} label="Image" />
							<Small icon={<ScalebarIcon />} label="Scalebar" off={false} />
						</SmallColumn>
						<SmallColumn $w={70}>
							<Small icon={<FrameInsertIcon />} label="Insert" caret="#777" />
							<Small icon={<FrameInsertIcon inner />} label="Frames" caret="#aaa" />
						</SmallColumn>
						<Big icon={<TextFrameIcon size={32} letter="#b4c6d8" thick={1} />} lines={['Edit', 'Text']} width={44} gap={4} off />
					</GroupBody>
					<GroupLabel>Insert</GroupLabel>
				</Group>
				<Group $w={424}>
					<GroupBody $pad={10}>
						<FontArea>
							<FontRow $h={25}>
								<Combo $w={140}>
									<select aria-label="Font"><option>Precision Sans W</option></select>
									<Caret w={6} h={4} color="#bbb" />
								</Combo>
								<Combo $w={47}>
									<select aria-label="Font size"><option>12</option></select>
									<Caret w={6} h={4} color="#bbb" />
								</Combo>
								<IconButton $w={25} aria-label="Grow font"><Letter>A<sup>+</sup></Letter></IconButton>
								<IconButton $w={25} aria-label="Shrink font"><Letter>A<sup>-</sup></Letter></IconButton>
								<RowRule $m={5} />
								<IconButton $w={30} aria-label="Text effects"><HollowA /><Caret w={6} h={4} color="#999" /></IconButton>
							</FontRow>
							<FontRow $h={20}>
								<IconButton $w={21} $shade aria-label="Bold"><Letter $bold>B</Letter></IconButton>
								<IconButton $w={25} aria-label="Italic"><Letter $italic $serif $size={20}>I</Letter></IconButton>
								<IconButton $w={22} aria-label="Underline"><Letter $under>U</Letter></IconButton>
								<IconButton $w={25} aria-label="All caps"><SmallCapsIcon /></IconButton>
								<IconButton $w={22} aria-label="Expanded"><Letter $size={12} $under>a b</Letter></IconButton>
								<IconButton $w={37} aria-label="Font colour"><FontColorIcon /><Caret w={6} h={4} color="#aaa" /></IconButton>
								<RowRule $m={4} />
								<IconButton aria-label="Halo"><HollowA color="#a9cfb9" /></IconButton>
								<IconButton $w={23} aria-label="Fill"><BucketIcon /></IconButton>
								<IconButton $w={36} aria-label="Box"><BoxIcon /><Caret w={6} h={4} color="#aaa" /></IconButton>
								<RowRule $m={4} />
								<IconButton $w={40} aria-label="Align text"><ParagraphIcon /><Caret w={6} h={4} color="#bbb" /></IconButton>
								<IconButton $w={30} aria-label="Line spacing"><LineSpaceIcon /><Caret w={6} h={4} color="#888" /></IconButton>
							</FontRow>
						</FontArea>
						<FrameArea>
							<RotateRow>
								<RotateIcon />
								<Combo $w={45}>
									<select aria-label="Rotation"><option> </option></select>
									<Caret w={6} h={4} color="#bbb" />
								</Combo>
							</RotateRow>
							<Small icon={<FrameStyleIcon />} label="Frame" />
							<Small icon={<ShapeStyleIcon />} label="Style" caret="#666" />
						</FrameArea>
					</GroupBody>
					<GroupLabel>Style</GroupLabel>
				</Group>
				<Group $w={56}>
					<GroupBody $pad={1}>
						<Big icon={<OptionsIcon />} lines={['Layout', 'Options']} width={55} off />
					</GroupBody>
					<GroupLabel>Options</GroupLabel>
				</Group>
				<Group $w={257}>
					<GroupBody $pad={2}>
						<Big icon={<ReorderIcon />} lines={['Reorder']} width={56} caret="below" off />
						<Big icon={<AlignIcon />} lines={['Alignment']} width={59} caret="below" off />
						<Big icon={<SelectIcon />} lines={['Select']} width={38} off shade />
						<Big icon={<ClearIcon />} lines={['Clear', 'Selection']} width={60} off />
						<Big icon={<HandIcon />} lines={['Tools']} width={36} caret="below" />
					</GroupBody>
					<GroupLabel>Edit</GroupLabel>
				</Group>
				<Collapse aria-label="Collapse ribbon">
					<svg width="8" height="5" viewBox="0 0 8 5"><path d="M1 4L4 1L7 4" fill="none" stroke="#666" strokeWidth="2" /></svg>
				</Collapse>
			</Ribbon>
		</>
	);
}

function MoveTo() {
	return (
		<LeftColumn>
			<Panel $gap={5}>
				<Header title="Ruler" />
				<RulerText>
					<dt>Distance</dt><dd>= 0 m (Cartesian)</dd>
					<dt>Total</dt><dd>= 0 m (Cartesian)</dd>
				</RulerText>
			</Panel>
			<Panel $flex={1}>
				<Header title="Move To" pin />
				<MoveBody>
					<FieldGroup>
						<legend><label htmlFor="place">Enter Address and/or Place</label></legend>
						<AddressRow>
							<AddressBox>
								<input id="place" type="text" defaultValue="adelaide" />
								<button aria-label="Recent places">
									<svg width="7" height="5" viewBox="0 0 7 5"><path d="M1 1L3.500 3.500L6 1" fill="none" stroke="#555" strokeWidth="1.500" /></svg>
								</button>
							</AddressBox>
							<button aria-label="Search"><SearchIcon size={18} /></button>
						</AddressRow>
					</FieldGroup>
					<FieldGroup $grow>
						<legend>Results</legend>
						<ResultList>
							{results.map((name, i) => <Result key={i} $selected={i === 0}>{name}</Result>)}
						</ResultList>
						<Radios>
							<label><input type="radio" name="zoom" />Preserve Current Scale</label>
							<label><input type="radio" name="zoom" defaultChecked />Zoom to Best View</label>
						</Radios>
					</FieldGroup>
				</MoveBody>
			</Panel>
			<PanelTabs>
				<PanelTab><ExplorerIcon />Explorer</PanelTab>
				<PanelTab><InfoIcon />Info</PanelTab>
				<PanelTab $active><MoveToIcon />Move To</PanelTab>
			</PanelTabs>
		</LeftColumn>
	);
}

function Lines({ items }) {
	return items.map(line => <div key={line}>{line}</div>);
}

function MapDocument() {
	return (
		<DocPane>
			<DocTabs>
				<DocTab $active>
					<MapTile stroke="#1b3558" />
					TextLegendScale_2021Popul_2,...,ExternalBoundary_2021Populatio Map
					<Diamond />
					<button aria-label="Close map"><CloseIcon /></button>
				</DocTab>
				<button aria-label="Map windows"><Caret w={8} h={5} color="#777" /></button>
			</DocTabs>
			<DocBody>
				<MapCanvas>
					<Placed $x={326} $y={40}>
						<svg width="20" height="51" viewBox="0 0 20 51"><path d="M0 0H5L19.500 51H14.500Z" /></svg>
					</Placed>
					<Placed $x={233} $y={186} $lh={10} style={{ fontWeight: 700 }}>Scale: 1:200,000 at A1 or 1:400,000 at A3</Placed>
					<Placed $x={203} $y={196}>
						<Scale>
							<div>{[0, 4, 8, 12, 16, 20, 24].map(n => <span key={n}>{n}</span>)}</div>
							<svg width="166" height="8" viewBox="0 0 166 8" shapeRendering="crispEdges">
								<path d="M0 0H166V8H0Z" />
								<path d="M28 1H55V4H28ZM83 1H110V4H83ZM138 1H165V4H138ZM1 5H27V7H1ZM56 5H82V7H56ZM111 5H137V7H111Z" fill="#fff" />
							</svg>
							<span>Kilometres</span>
						</Scale>
					</Placed>
					<Placed $x={213} $y={274} $size={9} $lh={11} $title>
						<Lines items={['Adelaide Region:', 'Population Change between 2016 and 2021 Censuses']} />
					</Placed>
					<Placed $x={401} $y={310}><LicenceBadge /></Placed>
					<Placed $x={200} $y={318}><Lines items={mapData} /></Placed>
					<Placed $x={193} $y={461}><Lines items={mapNotes} /></Placed>
					<Placed $x={194} $y={550}><Lines items={producer} /></Placed>
				</MapCanvas>
			</DocBody>
		</DocPane>
	);
}

function StreetMap() {
	return (
		<svg width="400" height="595" viewBox="1268 192 400 595" fontFamily={ui}>
			<path d="M1288 192L1293 225L1300 250L1305 280V760L1300 780L1294 787H1668V192Z" fill="#eeebe6" />
			<path d="M1606 192H1650L1662 210L1640 222L1612 214L1600 226L1578 222L1570 204Z" fill="#cfe2b8" />
			<path d="M1546 230L1560 236L1566 250H1544ZM1642 228L1660 240V250H1636ZM1375 222L1385 216L1388 240L1376 250H1370ZM1440 196L1452 200L1444 206ZM1494 206H1506V212H1494ZM1322 222L1327 226L1323 229ZM1310 243L1324 250H1308Z" fill="#d3e5c0" />
			<path d="M1420 210C1428 198 1432 212 1440 204S1446 192 1466 196M1374 250C1378 240 1370 226 1374 218S1394 208 1404 212L1420 208" fill="none" stroke="#a6ccc9" strokeWidth="2" />
			<path d="M1560 206C1572 222 1586 202 1600 208S1622 212 1632 206" fill="none" stroke="#94bce8" strokeWidth="4" />
			<g fill="none" stroke="#f2dd8e" strokeWidth="3">
				<path d="M1294 192L1308 250M1304 192L1316 250M1294 236H1330L1338 241H1404M1318 192V232M1412 192L1416 232M1404 250L1436 234L1470 232L1536 229M1466 192V230M1466 199H1536M1486 232L1490 250M1452 212H1470M1438 236L1432 250M1536 192V230M1540 214L1562 220L1620 222L1640 212M1544 232L1560 230M1560 222V250M1574 192L1580 210M1590 192L1600 206M1604 192L1630 206M1622 192L1640 208M1634 192L1612 250M1646 192L1640 250" />
				<path d="M1356 192C1352 212 1362 226 1366 250M1450 192L1454 230L1462 250" stroke="#f6c66c" strokeWidth="4" />
			</g>
			<g fill="none" stroke="#fffce2" strokeWidth="1">
				<path d="M1294 192L1308 250M1304 192L1316 250M1294 236H1330L1338 241H1404M1412 192L1416 232M1404 250L1436 234L1470 232L1536 229M1466 199H1536" />
			</g>
			<g stroke="#f4e3a0" strokeWidth="2">
				<path d="M1562 220H1640M1562 226H1632M1562 232H1638M1562 238H1640M1562 244H1636M1562 249H1640M1570 220V250M1580 220V250M1590 218V250M1600 218V250M1610 218V250M1620 218V250M1630 218V250" />
			</g>
			<path d="M1500 192L1514 250M1532 192C1540 212 1542 236 1528 250M1636 192C1640 214 1644 222 1654 232S1664 240 1664 250" fill="none" stroke="#d3bde6" strokeWidth="5" />
			<path d="M1550 192C1556 212 1570 222 1586 220M1544 250C1538 232 1544 220 1560 214" fill="none" stroke="#aeb3bd" strokeWidth="3" />
			<path d="M1657 250H1668V787H1657Z" fill="#efece4" />
			<path d="M1657 322H1668M1657 371H1668M1664 250V320M1657 300L1668 330" stroke="#d3bde6" strokeWidth="3" />
			<path d="M1658 334H1668M1657 343H1668M1657 392H1668M1664 405L1658 430L1668 445M1668 500L1658 545M1657 550H1668M1660 575L1668 600L1658 640L1668 660M1657 700L1668 730" fill="none" stroke="#f2dd8e" strokeWidth="3" />
			<path d="M1660 460L1668 450V475Z" fill="#bcd79d" />
			<path d="M1305 776H1660V787H1305Z" fill="#edeae4" />
			<path d="M1330 787L1350 776M1470 776L1500 787M1550 787L1580 776M1580 780H1660" stroke="#f6cf80" strokeWidth="3" />
			<path d="M1428 787L1438 776" stroke="#b894d2" strokeWidth="6" />
			<path d="M1370 776H1380L1376 784ZM1490 782L1500 776L1510 787H1490Z" fill="#cfe2b8" />
			<path d="M1442 216H1463V230H1442Z" fill="#5aa52c" />
			<text x="1444" y="227" fontSize="9" fontWeight="700" fill="#f7f3a0">A14</text>
			<g fill="#4a4a4a" stroke="#fff" strokeWidth="2" paintOrder="stroke" fontSize="12" fontWeight="500">
				<text x="1273" y="210">Henley Beach</text>
				<text x="1379" y="239">Lockleys</text>
				<text x="1659" y="230" fontSize="14">N</text>
				<text x="1364" y="790" fontSize="13">Wooderd</text>
				<text x="1656" y="454" fontSize="14">cl</text>
				<text x="1655" y="575">oo</text>
				<text x="1657" y="772" fontSize="11">Po</text>
				<text x="1301" y="700">W</text>
			</g>
			<g fill="#4a68c0" stroke="#fff" strokeWidth="2" paintOrder="stroke" fontSize="12">
				<text x="1635" y="196">First</text>
				<text x="1634" y="208">Wetla</text>
				<text x="1656" y="261">ka</text>
				<text x="1656" y="273">ar</text>
				<text x="1656" y="386">et</text>
			</g>
			<text transform="translate(1498 196) rotate(69)" fontSize="10" fill="#54386c">South Rd</text>
		</svg>
	);
}

function LayoutDocument() {
	return (
		<DocPane>
			<DocTabs>
				<DocTab>
					<LayoutTabIcon />
					Layout
					<button aria-label="Close layout"><CloseIcon color="#777" /></button>
				</DocTab>
				<button aria-label="Layout windows"><Caret w={8} h={5} color="#777" /></button>
			</DocTabs>
			<DocBody>
				<LayoutView>
					<PageArea>
						<Page>
							<StreetMap />
							<LegendCard>
								<ScaleEnds><span>0</span><span>10.000</span></ScaleEnds>
								<svg width="308" height="10" viewBox="0 0 308 10" shapeRendering="crispEdges">
									<path d="M0 0H308V10H0Z" />
									<path d="M1 1H38V4H1ZM77 1H154V4H77ZM38 6H77V9H38ZM154 6H307V9H154Z" fill="#fff" />
								</svg>
								<ScaleCaption>meters</ScaleCaption>
								<ScaleCaption>Scale 1:98.140</ScaleCaption>
								<h2>Adelaide Region:<br />Population Change between 2016 and 2021 Censuses</h2>
								{[layoutData, layoutNotes, producer].map(block => (
									<p key={block[0]}>{block.map(line => <span key={line}>{line}</span>)}</p>
								))}
							</LegendCard>
						</Page>
					</PageArea>
					<ScrollBar>
						<button aria-label="Scroll up"><Caret up w={7} h={4} /></button>
						<Thumb $flex={389} $margin="187px 0 0" />
						<button aria-label="Scroll down"><Caret w={7} h={4} /></button>
					</ScrollBar>
					<ScrollBar $row>
						<button aria-label="Scroll left">
							<svg width="4" height="8" viewBox="0 0 4 8"><path d="M4 0V8L0 4Z" fill="#888" /></svg>
						</button>
						<Thumb $flex={1} $margin="0 2px 0 38px" />
						<button aria-label="Scroll right">
							<svg width="4" height="8" viewBox="0 0 4 8"><path d="M0 0V8L4 4Z" fill="#888" /></svg>
						</button>
					</ScrollBar>
					<i />
					<PageBar>
						<button aria-label="First page"><Chevrons double /></button>
						<button aria-label="Previous page"><Chevrons /></button>
						<PageCount><span>1</span><span>of</span><span>1</span></PageCount>
						<button aria-label="Next page"><Chevrons right /></button>
						<button aria-label="Last page"><Chevrons right double /></button>
						<button aria-label="Add page"><PlusIcon green /></button>
						<button aria-label="Remove page"><CloseIcon size={14} color="#e0907f" weight={1.2} /></button>
						<ZoomTools>
							<span>80%</span>
							<button aria-label="Zoom out"><MinusIcon /></button>
							<input type="range" aria-label="Zoom" min="0" max="100" defaultValue="37" />
							<button aria-label="Zoom in"><PlusIcon /></button>
						</ZoomTools>
						<button aria-label="Fit page"><SpreadIcon /></button>
					</PageBar>
				</LayoutView>
			</DocBody>
		</DocPane>
	);
}

function BottomPanels() {
	return (
		<BottomRow>
			<Panel>
				<Header title="MapBasic" pin />
				<Editor>
					<Code>
						<div>(<em>"Precision Sans W"</em>,0,10,0)</div>
						<div>{'    '}<b>Selectable Off</b></div>
						<div>{'  '}<b>contrast</b> 50</div>
						<div>{'  '}<b>brightness</b> 50</div>
						<div>{'  '}<b>alpha</b> 255</div>
					</Code>
					<ScrollBar $track="#e6e6e6">
						<button aria-label="Scroll code up"><Caret up w={7} h={4} /></button>
						<Thumb $flex={8} $margin="38px 0 6px" />
						<button aria-label="Scroll code down"><Caret w={7} h={4} /></button>
					</ScrollBar>
				</Editor>
			</Panel>
			<Panel>
				<Header title="Message" />
			</Panel>
		</BottomRow>
	);
}

function App() {
	return (
		<Window>
			<GlobalStyle />
			<TopBar />
			<RibbonBar />
			<Workspace>
				<MoveTo />
				<Center>
					<Docs>
						<MapDocument />
						<LayoutDocument />
					</Docs>
					<BottomPanels />
				</Center>
				<Sidebar>
					<button><LayoutTabIcon tool /><span>Tools</span></button>
				</Sidebar>
			</Workspace>
			<StatusBar>
				<StatusItem $w={149}>Zoom: 89.000 m<Caret up w={12} h={6} color="#555" /></StatusItem>
				<StatusItem $w={281}>Editing: TextLegendScale_2021Population<Caret up w={12} h={6} color="#555" /></StatusItem>
				<StatusItem $w={123}>Selecting: None</StatusItem>
				<StatusItem $w={321}>Longitude / Latitude (Australia GDA 2020)</StatusItem>
				<StatusItem $w={534}>default<Caret up w={12} h={6} color="#555" /></StatusItem>
				<StatusItem $w={180}>Selected records: 0</StatusItem>
				<StatusItem>*Untitled.wor<Caret up w={12} h={6} color="#555" /></StatusItem>
				<Bell aria-label="Notifications">
					<svg width="14" height="14" viewBox="0 0 14 14"><path d="M7 0C11 0 11 5 11 7L14 11H0L3 7C3 5 3 0 7 0Z" fill="#9a9a9a" /></svg>
					<span>1</span>
				</Bell>
			</StatusBar>
		</Window>
	);
}

export default App;
